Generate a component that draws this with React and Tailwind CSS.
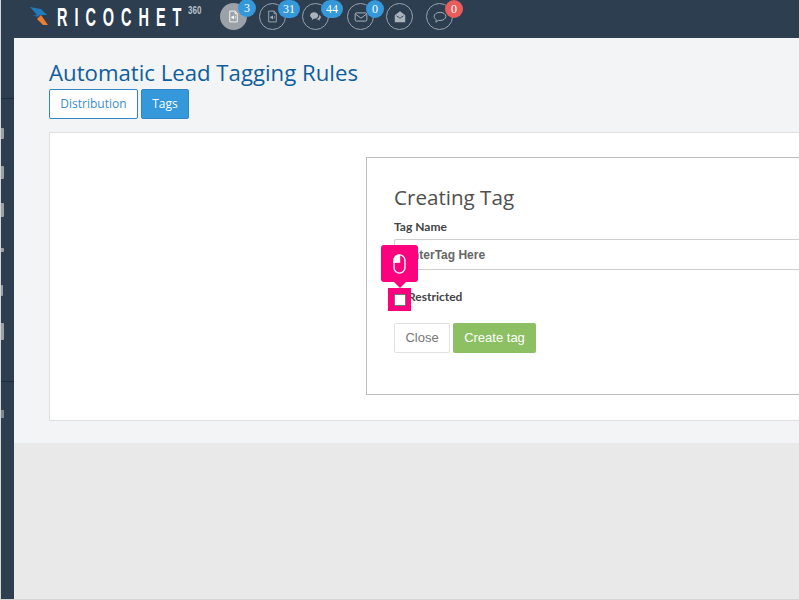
const slivers = [
    { top: 'mt-[29px]', size: 'h-[11px] w-[3px]' },
    { top: 'mt-[27px]', size: 'h-[13px] w-[3px]' },
    { top: 'mt-[24px]', size: 'h-[14px] w-[3px]' },
    { top: 'mt-[31px]', size: 'h-[4px] w-[3px]' },
    { top: 'mt-[33px]', size: 'h-[11px] w-[2px]' },
    { top: 'mt-[27px]', size: 'h-[17px] w-[3px]' },
];

function FileAudio({ className }) {
    return (
        <svg viewBox="0 0 24 24" className={className} fill="none" stroke="currentColor" strokeWidth="1.6">
            <path d="M5 2h10l4 5v15H5z" />
            <path d="M15 2v5h4" />
            <path d="M8 12h2l3-2.5v8L10 15H8z" fill="currentColor" stroke="none" />
            <path d="M15 11c1 1 1 4 0 5" strokeWidth="1.2" />
        </svg>
    );
}

function NavCircle({ badge, badgeColor = 'bg-[#3498db]', active, children }) {
    return (
        <div className={`relative flex h-[27px] w-[27px] shrink-0 items-center justify-center rounded-full ${active ? 'bg-[#9ba1a8] text-white' : 'border border-[#9aa3ad] text-[#aab2bb]'}`}>
            {children}
            {badge !== undefined && (
                <span className={`absolute -top-[4px] left-[18px] flex h-[18px] min-w-[18px] items-center justify-center rounded-full px-[5px] font-['Liberation_Serif',serif] text-[12px] leading-none text-white ${badgeColor}`}>
                    {badge}
                </span>
            )}
        </div>
    );
}

export default function App() {
    return (
        <div className="relative flex h-[600px] w-[800px] flex-col overflow-hidden border-b border-l border-r border-[#d4d4d4] bg-[#e9e9e9] font-['Open_Sans',sans-serif]">
            <header className="flex h-[38px] shrink-0 items-start bg-[#2c3e50] pt-[3px]">
                <div className="ml-[29px] flex h-[27px] w-[189px] items-center">
                    <svg viewBox="0 0 18 18" className="mt-[-2px] h-[18px] w-[18px] shrink-0">
                        <path d="M0 0l11 2 6 6H7z" fill="#2479b8" />
                        <path d="M3 8h8l-4 2z" fill="#1f6ea8" />
                        <path d="M7 12l4-4 7 10h-5z" fill="#ee7d2e" />
                    </svg>
                    <div className="relative ml-[9px] h-[18px] w-[140px]">
                        <span className="absolute left-0 top-[-3px] origin-left whitespace-nowrap font-['Liberation_Sans',sans-serif] text-[25px] font-bold leading-none tracking-[12px] text-white [transform:scaleX(0.58)]">
                            RICOCHE<span className="tracking-normal">T</span>
                        </span>
                        <span className="absolute left-[131px] top-[-2px] origin-left whitespace-nowrap font-['Liberation_Sans',sans-serif] text-[10px] font-bold leading-none text-[#b9c0c7] [transform:scaleX(0.8)]">
                            360
                        </span>
                    </div>
                </div>
                <div className="ml-[1px] flex items-center">
                    <NavCircle active badge={3}>
                        <FileAudio className="h-[13px] w-[13px]" />
                    </NavCircle>
                    <div className="ml-[12px]">
                        <NavCircle badge={31}>
                            <FileAudio className="h-[13px] w-[13px]" />
                        </NavCircle>
                    </div>
                    <div className="ml-[16px]">
                        <NavCircle badge={44}>
                            <svg viewBox="0 0 24 24" className="h-[13px] w-[13px]" fill="currentColor">
                                <path d="M9 4c5 0 8 2.5 8 6s-3 6-8 6l-4 3 1-4c-2-1-4-3-4-5 0-3.500 3-6 7-6z" />
                                <path d="M19 9c2 1 3 2.500 3 4.500 0 1.500-1 3-2.500 3.500l.5 3-3.500-2.500c-1.500 0-3-.5-4-1 4 0 7-3 6.500-7.500z" />
                            </svg>
                        </NavCircle>
                    </div>
                    <div className="ml-[18px]">
                        <NavCircle badge={0}>
                            <svg viewBox="0 0 24 24" className="h-[14px] w-[14px]" fill="none" stroke="currentColor" strokeWidth="1.7">
                                <rect x="2" y="5" width="20" height="14" rx="2" />
                                <path d="M2.500 7l9.500 7 9.500-7" />
                            </svg>
                        </NavCircle>
                    </div>
                    <div className="ml-[12px]">
                        <NavCircle>
                            <svg viewBox="0 0 24 24" className="h-[14px] w-[14px]" fill="currentColor">
                                <path d="M12 2l9 7v12H3V9z" />
                                <path d="M6 10l6 4 6-4" fill="none" stroke="#2c3e50" strokeWidth="1.500" />
                            </svg>
                        </NavCircle>
                    </div>
                    <div className="ml-[13px]">
                        <NavCircle badge={0} badgeColor="bg-[#e85c5c]">
                            <svg viewBox="0 0 24 24" className="h-[14px] w-[14px]" fill="none" stroke="currentColor" strokeWidth="1.600">
                                <path d="M12 4c5.500 0 10 3 10 7s-4.500 7-10 7c-1 0-2 0-3-.3L5 21l.5-4.500C3.300 15 2 13.200 2 11c0-4 4.500-7 10-7z" />
                            </svg>
                        </NavCircle>
                    </div>
                </div>
            </header>

            <div className="flex min-h-0 flex-1">
                <aside className="flex w-[13px] shrink-0 flex-col bg-[#2c3e50]">
                    <div className="mt-[60px] h-px bg-[#1f2c39]" />
                    {slivers.map((s, i) => (
                        <div key={i} className={`${s.top} ${s.size} rounded-r-[1px] bg-[#9ba1a8]`} />
                    ))}
                    <div className="mt-[41px] h-px bg-[#1f2c39]" />
                    <div className="mt-[28px] h-[8px] w-[3px] bg-[#7d8894]" />
                </aside>

                <div className="flex min-w-0 flex-1 flex-col">
                    <main className="h-[405px] shrink-0 bg-[#f3f4f6] pl-[35px] pt-[20px]">
                        <h1 className="whitespace-nowrap text-[22.2px] font-normal leading-[30px] text-[#105e9c]">
                            Automatic Lead Tagging Rules
                        </h1>
                        <div className="mt-[1px] flex gap-[3px]">
                            <button className="h-[30px] w-[89px] rounded-[2px] border border-[#2f86c4] bg-white text-[12px] text-[#3a8cc9]">
                                Distribution
                            </button>
                            <button className="h-[30px] w-[48px] rounded-[2px] border border-[#2f86c4] bg-[#3498db] text-[12px] text-white">
                                Tags
                            </button>
                        </div>

                        <section className="mt-[13px] h-[289px] border border-r-0 border-[#e0e0e0] bg-white pl-[316px] pt-[24px]">
                            <div className="h-[238px] border border-r-0 border-[#bdbdbd] bg-white pl-[27px] pt-[24px]">
                                <h2 className="text-[20.6px] font-normal leading-[30px] text-[#4f4f4f]">Creating Tag</h2>
                                <label className="mt-[7px] block font-['Lato',sans-serif] text-[12px] font-bold leading-[16px] text-[#444]">Tag Name</label>
                                <div className="mt-[4px] flex h-[31px] items-center rounded-l-[2px] border border-r-0 border-[#cfcfcf] pl-[9px] font-['Liberation_Sans',sans-serif] text-[12px] font-bold text-[#666]">
                                    EnterTag Here
                                </div>
                                <div className="mt-[19px] flex h-[16px] items-center">
                                    <span className="inline-block h-[13px] w-[13px] rounded-[1px] border border-[#777] bg-white" />
                                    <span className="ml-[1px] font-['Lato',sans-serif] text-[12px] font-bold text-[#444]">Restricted</span>
                                </div>
                                <div className="mt-[18px] flex gap-[3px] font-['Liberation_Sans',sans-serif] text-[13px]">
                                    <button className="h-[30px] w-[56px] rounded-[2px] border border-[#e2e2e2] bg-white text-[#777]">Close</button>
                                    <button className="h-[30px] w-[83px] rounded-[2px] bg-[#8cc063] text-white">Create tag</button>
                                </div>
                            </div>
                        </section>
                    </main>
                </div>
            </div>

            {/* walkthrough pointer over the checkbox */}
            <div className="absolute left-[380px] top-[245px] flex h-[37px] w-[37px] items-center justify-center rounded-[3px] bg-[#ff007f]">
                <svg viewBox="0 0 14 22" className="h-[20px] w-[13px]" fill="none" stroke="white" strokeWidth="1.500">
                    <rect x="1" y="1" width="12" height="20" rx="6" />
                    <path d="M7 1a6 6 0 0 0-6 6v2h6z" fill="white" />
                </svg>
            </div>
            <div className="absolute left-[393px] top-[282px] h-0 w-0 border-x-[6px] border-t-[6px] border-x-transparent border-t-[#ff007f]" />
            <div className="absolute left-[387px] top-[288px] h-[23px] w-[23px] bg-[#ff007f] p-[6px]">
                <div className="h-[12px] w-[12px] border border-[#777] bg-white" />
            </div>
        </div>
    );
}
